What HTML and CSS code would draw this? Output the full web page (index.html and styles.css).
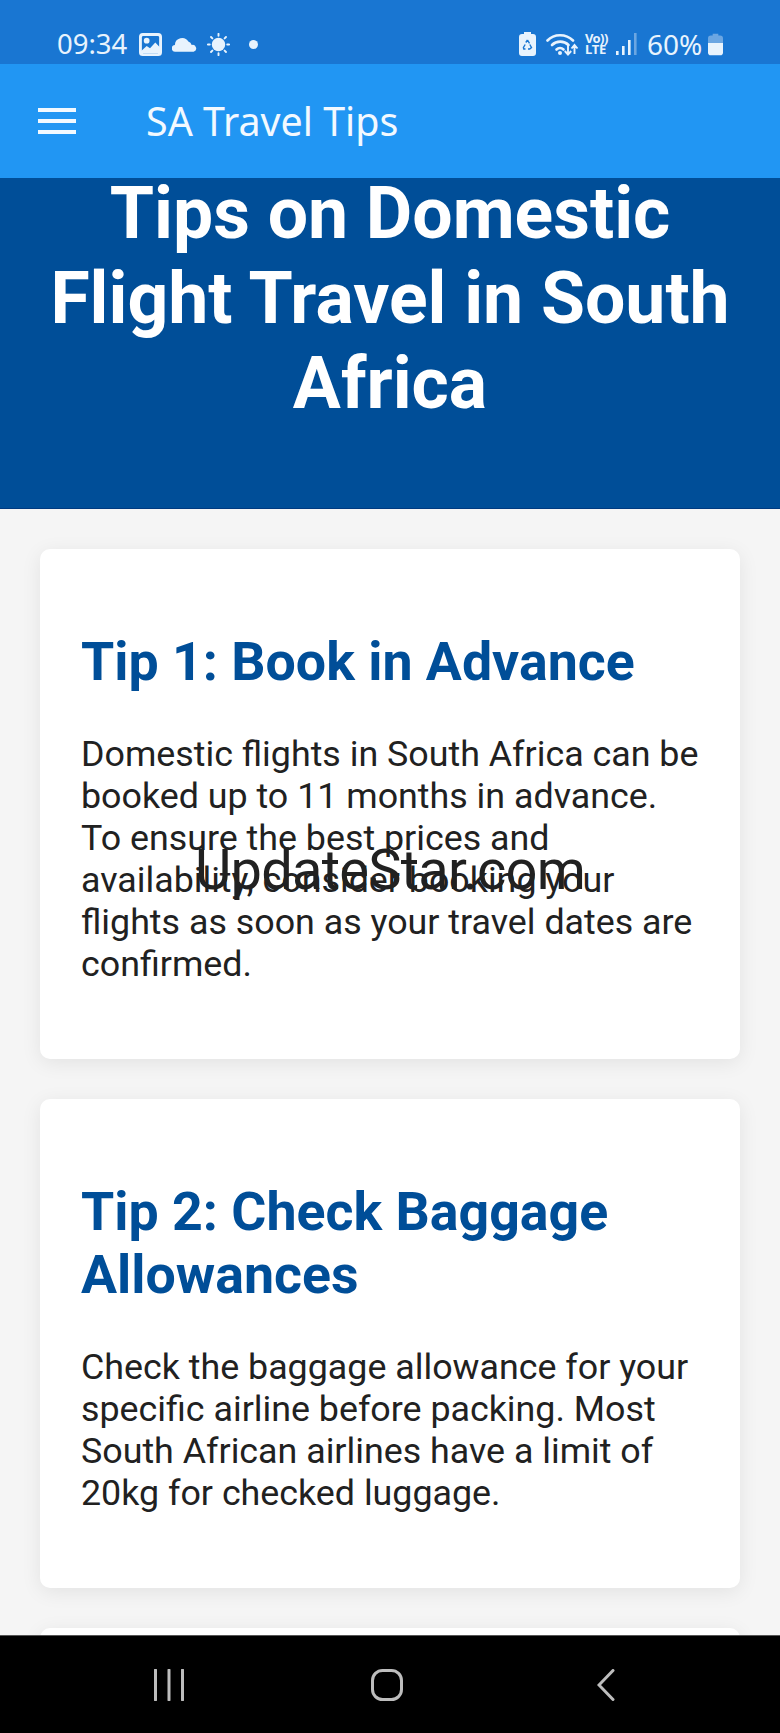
FILE: index.html
```html
<!DOCTYPE html>
<html lang="en">
<head>
<meta charset="utf-8">
<title>SA Travel Tips</title>
<link rel="stylesheet" href="styles.css">
</head>
<body>
<div class="phone">
  <div class="status">
    <div class="status-left">
      <span class="time">09:34</span>
      <svg class="ic-gallery" viewBox="0 0 24 24"><path fill-rule="evenodd" d="M4 0h16a4 4 0 0 1 4 4v16a4 4 0 0 1-4 4H4a4 4 0 0 1-4-4V4a4 4 0 0 1 4-4zM4.500 3A1.500 1.500 0 0 0 3 4.500v15A1.500 1.500 0 0 0 4.500 21h15a1.500 1.500 0 0 0 1.500-1.500v-15A1.500 1.500 0 0 0 19.500 3z"/><circle cx="8" cy="8" r="3"/><path d="M2 19l6-5.500 3.500 2.500 5.500-6 5 5v6H2z"/></svg>
      <svg class="ic-cloud" viewBox="0 0 26 15"><path d="M3.500 15a3.500 3.500 0 0 1-.5-7A7.500 7.500 0 0 1 17 4.500 5.500 5.500 0 0 1 20.500 8 3.600 3.600 0 0 1 22.500 15z"/></svg>
      <svg class="ic-sun" viewBox="0 0 24 24"><circle cx="12" cy="12" r="7"/><g stroke-width="2" stroke-linecap="round"><path d="M12 .9v2M12 21.100v2M.9 12h2M21.100 12h2M4.200 4.200l1.400 1.400M18.400 18.400l1.400 1.400M4.200 19.800l1.400-1.400M18.400 5.600l1.400-1.400"/></g></svg>
      <span class="dot"></span>
    </div>
    <div class="status-right">
      <svg class="ic-saver" viewBox="0 0 17 24"><path fill-rule="evenodd" d="M5 0h7v2h2a3 3 0 0 1 3 3v16a3 3 0 0 1-3 3H3a3 3 0 0 1-3-3V5a3 3 0 0 1 3-3h2z"/><path class="cut" d="M8.500 8l2 3.300M10.800 12.500l1.700 3-1.800 1.500H9M6.500 17H4.800l-.4-1.500L6.200 12.500M6.800 10.500l1.700-2.500"/></svg>
      <svg class="ic-wifi" viewBox="0 0 33 24"><g fill="none" stroke-width="2.600" stroke-linecap="round"><path d="M1.500 8.500C8 1.500 20 1.500 27 8.500"/><path d="M6 13c4.500-4.500 12-4.500 16.500 0"/><path d="M10.500 17.500c2-2 5-2 7 0"/></g><circle cx="14" cy="21" r="2"/><path d="M22 13v9M18.800 19l3.200 3.500 3.200-3.500M28.500 22v-9M25.500 16.500l3-3.500 3 3.500" fill="none" stroke-width="1.900"/></svg>
      <span class="volte"><span class="vo">Vo))</span><span class="lte">LTE</span></span>
      <svg class="ic-signal" viewBox="0 0 21 22"><rect x="0" y="18" width="2.600" height="4"/><rect x="6" y="13" width="2.600" height="9"/><rect x="12" y="7" width="2.600" height="15"/><rect class="dim" x="18" y="0" width="2.600" height="22"/></svg>
      <span class="pct">60%</span>
      <svg class="ic-batt" viewBox="0 0 16 23"><path class="empty" d="M5 0h6v2h2a3 3 0 0 1 3 3v6H0V5a3 3 0 0 1 3-3h2z"/><path d="M0 10h16v10a3 3 0 0 1-3 3H3a3 3 0 0 1-3-3z"/></svg>
    </div>
  </div>
  <header class="appbar">
    <svg class="menu" viewBox="0 0 38 26"><rect y="0" width="38" height="4"/><rect y="11" width="38" height="4"/><rect y="22" width="38" height="4"/></svg>
    <span class="appbar-title">SA Travel Tips</span>
  </header>
  <div class="view">
    <section class="hero">
      <h1>Tips on Domestic Flight Travel in South Africa</h1>
    </section>
    <main class="list">
      <article class="card">
        <h2>Tip 1: Book in Advance</h2>
        <p>Domestic flights in South Africa can be booked up to 11 months in advance. To ensure the best prices and availability, consider booking your flights as soon as your travel dates are confirmed.</p>
      </article>
      <article class="card">
        <h2>Tip 2: Check Baggage Allowances</h2>
        <p>Check the baggage allowance for your specific airline before packing. Most South African airlines have a limit of 20kg for checked luggage.</p>
      </article>
      <article class="card card-next"></article>
    </main>
    <div class="watermark">UpdateStar.com</div>
  </div>
  <nav class="navbar">
    <svg class="nav-recent" viewBox="0 0 30 32"><path d="M1.500 1v30M15 1v30M28.500 1v30"/></svg>
    <svg class="nav-home" viewBox="0 0 32 32"><rect x="1.500" y="1.500" width="29" height="29" rx="10"/></svg>
    <svg class="nav-back" viewBox="0 0 18 32"><path d="M16 1.500L2 16l14 14.500"/></svg>
  </nav>
</div>
</body>
</html>
```
FILE: styles.css
```css
* { box-sizing: border-box; }
html, body { margin: 0; padding: 0; }
body { font-family: Roboto, "Liberation Sans", sans-serif; background: #000; }
.phone { width: 780px; height: 1733px; display: flex; flex-direction: column; overflow: hidden; }

.status { height: 64px; flex: none; background: #1976d2; display: flex; justify-content: space-between; align-items: center; padding: 24px 57px 0; color: #e8f3fd; }
.status svg { fill: #e8f3fd; stroke: #e8f3fd; stroke-width: 0; display: block; }
.status-left, .status-right { display: flex; align-items: center; }
.time { font-family: "Noto Sans", Roboto, sans-serif; font-size: 27.500px; line-height: 30px; width: 82px; }
.ic-gallery { width: 23px; height: 23px; }
.ic-cloud { width: 25px; height: 15px; margin-left: 10px; }
.ic-sun { width: 23px; height: 23px; margin-left: 10px; }
.ic-sun g { stroke: #e8f3fd; }
.dot { width: 9px; height: 9px; border-radius: 50%; background: #e8f3fd; margin-left: 19px; }
.ic-saver { width: 17px; height: 24px; margin-right: 10px; }
.ic-saver .cut { fill: none; stroke: #1976d2; stroke-width: 1.400px; }
.ic-wifi { width: 33px; height: 24px; margin-right: 6px; }
.ic-wifi g, .ic-wifi path { stroke: #e8f3fd; }
.volte { display: flex; flex-direction: column; font-family: "Noto Sans", sans-serif; font-weight: 700; font-size: 13px; line-height: 11px; width: 22px; margin-right: 9px; }
.vo { letter-spacing: -.6px; white-space: nowrap; }
.lte { letter-spacing: -.3px; }
.ic-signal { width: 21px; height: 22px; margin-right: 10px; }
.ic-signal .dim { fill: #6ba6e2; }
.pct { font-family: "Noto Sans", Roboto, sans-serif; font-size: 28px; line-height: 30px; width: 56px; margin-right: 5px; white-space: nowrap; }
.ic-batt { width: 15px; height: 23px; }
.ic-batt .empty { fill: #6ba6e2; }

.appbar { height: 114px; flex: none; background: #2196f3; display: flex; align-items: center; padding: 0 0 0 38px; color: #fff; }
.menu { width: 38px; height: 26px; fill: #f2f9ff; flex: none; margin-top: -1px; }
.appbar-title { font-family: "Noto Sans", Roboto, sans-serif; font-size: 39.400px; margin-left: 70px; margin-top: -1px; color: #f2f9ff; }

.view { flex: 1; min-height: 0; position: relative; background: #f5f5f5; }
.hero { background: #004e98; height: 331px; border-bottom: 1px solid #003a80; padding: 0 40px; display: flow-root; }
.hero h1 { margin: -7px 0 0; font-size: 71.500px; line-height: 85px; font-weight: 700; color: #fff; text-align: center; }

.list { padding: 40px; display: flex; flex-direction: column; gap: 40px; }
.card { background: #fff; border-radius: 10px; padding: 81px 41px 74px; box-shadow: 0 4px 20px rgba(0,0,0,.08); }
.card-next { height: 30px; padding: 0; flex: none; }
.card h2 { margin: 0 0 40px; font-size: 53.700px; line-height: 63px; font-weight: 700; color: #004e98; }
.card p { margin: 0; font-size: 35.800px; line-height: 42px; color: #212121; }

.watermark { position: absolute; left: 0; right: 0; top: 659px; text-align: center; font-family: Roboto, sans-serif; font-size: 56px; letter-spacing: -.75px; line-height: 66px; color: #212121; white-space: nowrap; }

.navbar { height: 98px; flex: none; background: #000; position: relative; border-top: 1px solid #555; }
.navbar svg { position: absolute; top: 33px; fill: none; stroke: #bdbdbd; stroke-width: 3; stroke-linecap: round; height: 32px; }
.nav-recent { left: 154px; width: 30px; }
.nav-home { left: 371px; width: 32px; }
.nav-back { left: 597px; width: 18px; }
```
